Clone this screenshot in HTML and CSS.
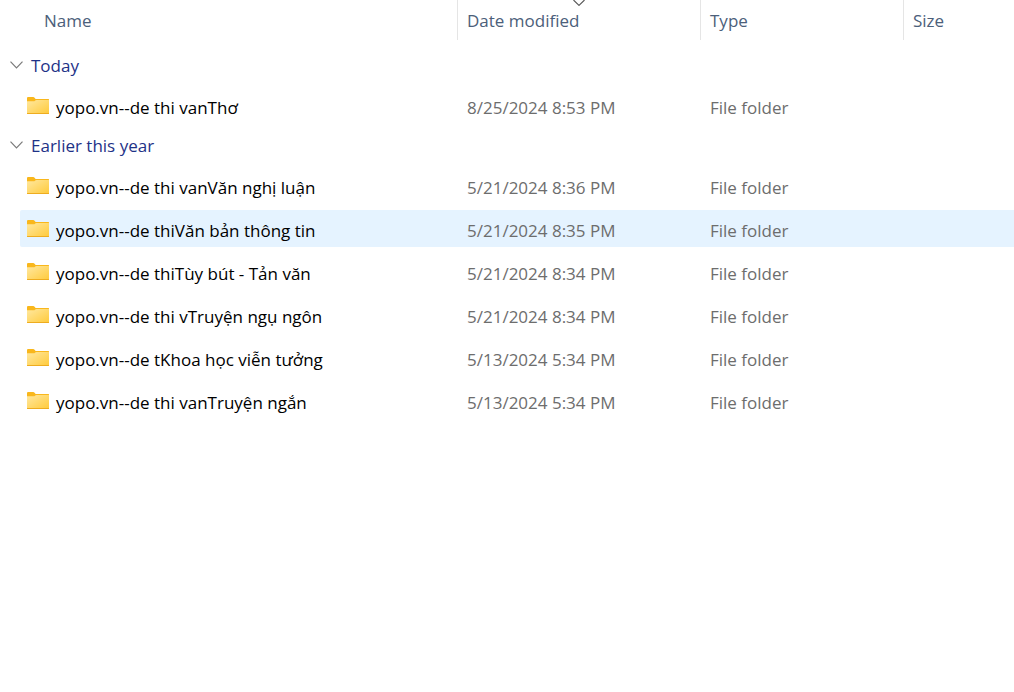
FILE: index.html
```
<!DOCTYPE html>
<html lang="en">
<head>
<meta charset="utf-8">
<title>Folders</title>
<link rel="stylesheet" href="styles.css">
</head>
<body>
<svg class="defs" width="0" height="0" aria-hidden="true">
  <defs>
    <linearGradient id="front" x1="0" y1="0" x2="1" y2="1">
      <stop offset="0" stop-color="#ffe8a0"/>
      <stop offset="1" stop-color="#ffca3a"/>
    </linearGradient>
    <symbol id="folder" viewBox="0 0 22 17">
      <path d="M0 1.2Q0 0 1 0H6.2Q7 0 7.6 .7L8.6 2H21.5Q22 2 22 2.6V8H0Z" fill="#f9b71c"/>
      <path d="M0 4.2H6.8Q7.4 4.2 8 3.7L8.6 3.2Q9 3 9.6 3H22V17H0Z" fill="url(#front)"/>
      <path d="M0 16H22V16.6Q22 17 21.6 17H.4Q0 17 0 16.6Z" fill="#eeac1f"/>
    </symbol>
    <symbol id="chevron" viewBox="0 0 13 8">
      <path d="M.5 .7L6.5 6.8L12.5 .7" fill="none" stroke="#7a7a7a" stroke-width="1.2"/>
    </symbol>
  </defs>
</svg>
<table class="files">
  <colgroup><col class="col-name"><col class="col-date"><col class="col-type"><col></colgroup>
  <thead>
    <tr>
      <th scope="col"><button class="head head-name" type="button">Name</button></th>
      <th scope="col" aria-sort="descending"><button class="head" type="button">Date modified<svg class="sort" width="12" height="6" viewBox="0 0 12 6" aria-hidden="true"><path d="M.5 0L6 5.4L11.5 0" fill="none" stroke="#555" stroke-width="1.1"/></svg></button></th>
      <th scope="col"><button class="head" type="button">Type</button></th>
      <th scope="col"><button class="head" type="button">Size</button></th>
    </tr>
  </thead>
  <tbody>
    <tr class="group group-first"><th colspan="4" scope="rowgroup"><button class="toggle" type="button" aria-expanded="true"><svg class="chevron" aria-hidden="true"><use href="#chevron"/></svg>Today</button></th></tr>
    <tr class="row"><td><span class="name"><svg class="folder" aria-hidden="true"><use href="#folder"/></svg>yopo.vn--de thi vanThơ</span></td><td>8/25/2024 8:53 PM</td><td>File folder</td><td></td></tr>
  </tbody>
  <tbody>
    <tr class="group"><th colspan="4" scope="rowgroup"><button class="toggle" type="button" aria-expanded="true"><svg class="chevron" aria-hidden="true"><use href="#chevron"/></svg>Earlier this year</button></th></tr>
    <tr class="row"><td><span class="name"><svg class="folder" aria-hidden="true"><use href="#folder"/></svg>yopo.vn--de thi vanVăn nghị luận</span></td><td>5/21/2024 8:36 PM</td><td>File folder</td><td></td></tr>
    <tr class="row active"><td><span class="name"><svg class="folder" aria-hidden="true"><use href="#folder"/></svg>yopo.vn--de thiVăn bản thông tin</span></td><td>5/21/2024 8:35 PM</td><td>File folder</td><td></td></tr>
    <tr class="row"><td><span class="name"><svg class="folder" aria-hidden="true"><use href="#folder"/></svg>yopo.vn--de thiTùy bút - Tản văn</span></td><td>5/21/2024 8:34 PM</td><td>File folder</td><td></td></tr>
    <tr class="row"><td><span class="name"><svg class="folder" aria-hidden="true"><use href="#folder"/></svg>yopo.vn--de thi vTruyện ngụ ngôn</span></td><td>5/21/2024 8:34 PM</td><td>File folder</td><td></td></tr>
    <tr class="row"><td><span class="name"><svg class="folder" aria-hidden="true"><use href="#folder"/></svg>yopo.vn--de tKhoa học viễn tưởng</span></td><td>5/13/2024 5:34 PM</td><td>File folder</td><td></td></tr>
    <tr class="row"><td><span class="name"><svg class="folder" aria-hidden="true"><use href="#folder"/></svg>yopo.vn--de thi vanTruyện ngắn</span></td><td>5/13/2024 5:34 PM</td><td>File folder</td><td></td></tr>
  </tbody>
</table>
</body>
</html>
```
FILE: styles.css
```
* { box-sizing: border-box; }

body {
  margin: 0;
  background: #fff;
  color: #000;
  font: 17px/24px "Segoe UI", "Open Sans", "Noto Sans", sans-serif;
}

.defs { position: absolute; }

.files {
  width: 100%;
  table-layout: fixed;
  border-collapse: separate;
  border-spacing: 0;
}

.col-name { width: 457px; }
.col-date { width: 243px; }
.col-type { width: 203px; }

th, td {
  padding: 0;
  text-align: left;
  font-weight: 400;
}

button {
  border: 0;
  background: none;
  color: inherit;
  font: inherit;
  text-align: left;
}

thead th + th { border-left: 1px solid #e5e5e5; }

.head {
  display: block;
  position: relative;
  width: 100%;
  height: 40px;
  padding: 2px 9px 0;
  color: #4c607a;
}

.head-name { padding-left: 44px; }

.sort {
  position: absolute;
  top: 0;
  left: 50%;
  margin-left: -6px;
}

.group-first th { padding-top: 7px; }

.toggle {
  display: flex;
  align-items: center;
  gap: 8px;
  height: 37px;
  padding: 0 0 0 10px;
  color: #1e3287;
}

.chevron { width: 13px; height: 8px; margin-bottom: 2px; }

.row td {
  height: 43px;
  padding: 5px 10px 0;
  border: solid transparent;
  border-width: 3px 0;
  background-clip: padding-box;
  color: #6d6d6d;
}

.row td:first-child {
  padding-left: 7px;
  border-left-width: 20px;
  border-radius: 22px 0 0 22px / 5px 0 0 5px;
  color: #000;
}

.active td { background-color: #e5f3ff; }

.name {
  display: flex;
  align-items: center;
  gap: 7px;
}

.folder { width: 22px; height: 17px; margin-bottom: 5px; }
```
